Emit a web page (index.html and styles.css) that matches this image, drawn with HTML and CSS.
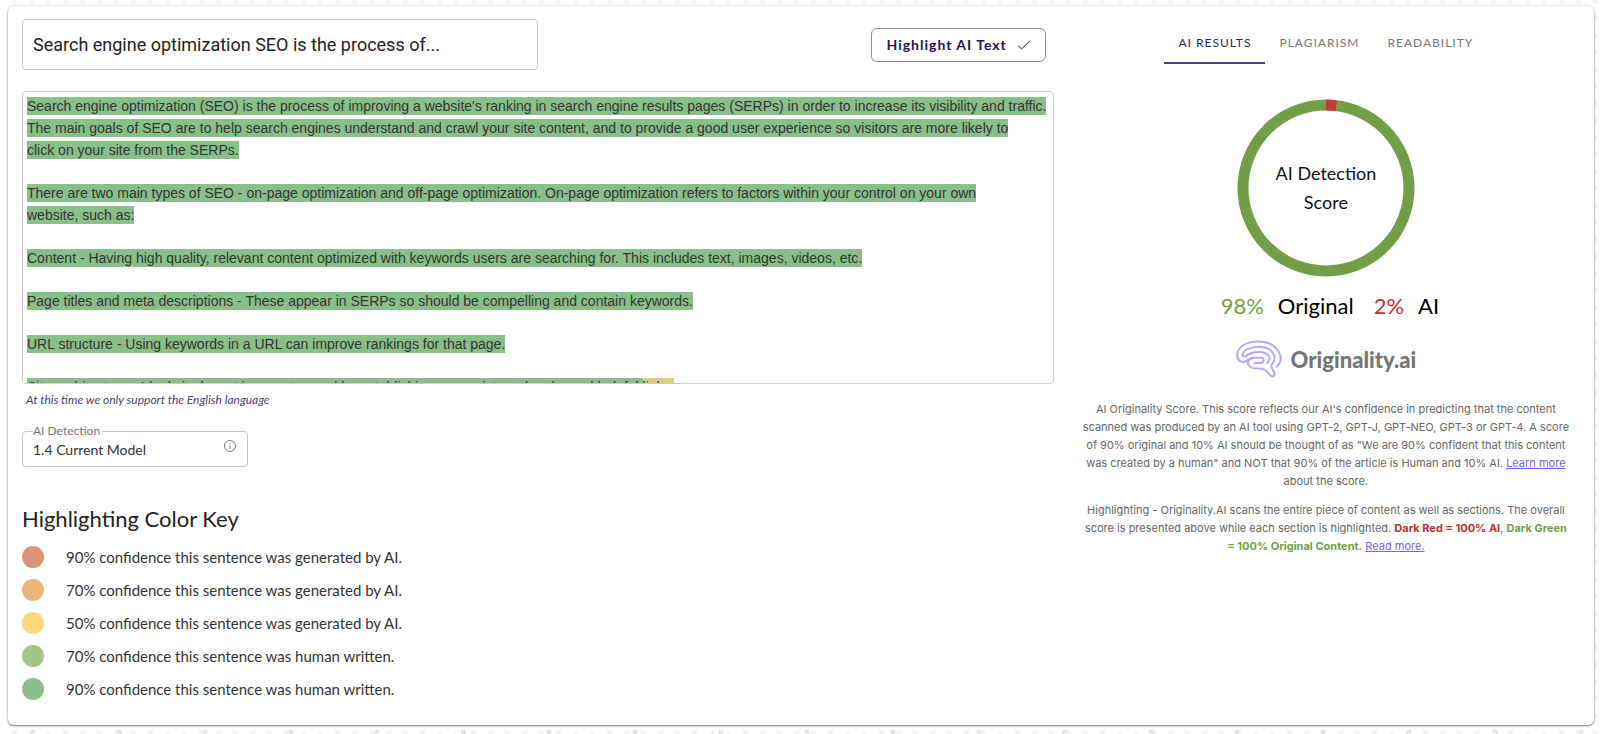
FILE: index.html
```html
<!DOCTYPE html>
<html lang="en">
<head>
    <meta charset="UTF-8">
    <meta name="viewport" content="width=device-width, initial-scale=1.0">
    <title>Content Scan</title>
    <link rel="stylesheet" href="styles.css">
</head>
<body>

    <main class="card">
        <section class="content">
            <div class="top-row">
                <input type="text" class="title-input" aria-label="Title" value="Search engine optimization SEO is the process of...">
                <button type="button" class="highlight-btn">
                    Highlight AI Text
                    <svg width="14" height="10" viewBox="0 0 14 10" fill="none" stroke="currentColor" aria-hidden="true"><path d="M1 5.5L4.5 9L13 0.8"/></svg>
                </button>
            </div>

            <div class="scan-text">
                <p><mark>Search engine optimization (SEO) is the process of improving a website's ranking in search engine results pages (SERPs) in order to increase its visibility and traffic. The main goals of SEO are to help search engines understand and crawl your site content, and to provide a good user experience so visitors are more likely to<br>click on your site from the SERPs.</mark></p>
                <p><mark>There are two main types of SEO - on-page optimization and off-page optimization. On-page optimization refers to factors within your control on your own<br>website, such as:</mark></p>
                <p><mark>Content - Having high quality, relevant content optimized with keywords users are searching for. This includes text, images, videos, etc.</mark></p>
                <p><mark>Page titles and meta descriptions - These appear in SERPs so should be compelling and contain keywords.</mark></p>
                <p><mark>URL structure - Using keywords in a URL can improve rankings for that page.</mark></p>
                <p><mark>Site architecture - Ideal site layout is easy to crawl by establishing proper internal paths and helpful </mark><mark class="unsure">links.</mark></p>
            </div>
            <p class="note">At this time we only support the English language</p>

            <fieldset class="model">
                <legend><label for="model">AI Detection</label></legend>
                <select id="model">
                    <option>1.4 Current Model</option>
                </select>
                <svg width="14" height="14" viewBox="0 0 14 14" fill="none" stroke="#777" aria-hidden="true"><circle cx="7" cy="7" r="5.5"/><path d="M7 6.3V10M7 4V5.2"/></svg>
            </fieldset>

            <h2>Highlighting Color Key</h2>
            <ul class="color-key">
                <li><span class="dot ai-90"></span>90% confidence this sentence was generated by AI.</li>
                <li><span class="dot ai-70"></span>70% confidence this sentence was generated by AI.</li>
                <li><span class="dot ai-50"></span>50% confidence this sentence was generated by AI.</li>
                <li><span class="dot human-70"></span>70% confidence this sentence was human written.</li>
                <li><span class="dot human-90"></span>90% confidence this sentence was human written.</li>
            </ul>
        </section>

        <section class="results">
            <div class="tabs" role="tablist">
                <button type="button" role="tab" class="tab active" aria-selected="true">AI RESULTS</button>
                <button type="button" role="tab" class="tab" aria-selected="false">PLAGIARISM</button>
                <button type="button" role="tab" class="tab" aria-selected="false">READABILITY</button>
            </div>

            <div class="gauge">
                <svg viewBox="0 0 178 178" fill="none" stroke-width="11" aria-hidden="true">
                    <circle cx="89" cy="89" r="83" stroke="#739e48"/>
                    <circle cx="89" cy="89" r="83" stroke="#c43c35" pathLength="100" stroke-dasharray="2 98" transform="rotate(-90 89 89)"/>
                </svg>
                <span>AI Detection Score</span>
            </div>

            <div class="score">
                <span class="green">98%</span><span>Original</span>
                <span class="red">2%</span><span>AI</span>
            </div>

            <div class="logo">
                <svg width="46" height="38" viewBox="10 8 138 114" fill="none" stroke="#b9a5fb" stroke-width="6" stroke-linecap="round" stroke-linejoin="round" aria-hidden="true">
                    <path d="M132 88C150 74 148 48 126 28C100 6 48 8 26 28C8 46 10 70 30 74C46 76 44 61 62 61H84C96 61 96 76 84 77H66"/>
                    <path d="M62 61C46 64 42 76 50 86C58 96 72 93 86 94C104 96 104 106 112 113C120 120 128 116 126 108C124 98 114 94 116 84C120 76 128 72 126 60C122 40 104 28 80 28C52 28 32 40 30 50C28 60 38 59 46 52C58 44 72 43 84 44C112 46 116 66 104 77"/>
                </svg>
                <span>Originality.ai</span>
            </div>

            <p>AI Originality Score. This score reflects our AI's confidence in predicting that the content scanned was produced by an AI tool using GPT-2, GPT-J, GPT-NEO, GPT-3 or GPT-4. A score of 90% original and 10% AI should be thought of as "We are 90% confident that this content was created by a human" and NOT that 90% of the article is Human and 10% AI. <a href="#">Learn more</a> about the score.</p>
            <p>Highlighting - Originality.AI scans the entire piece of content as well as sections. The overall score is presented above while each section is highlighted. <b class="red">Dark Red = 100% AI</b>, <b class="green">Dark Green = 100% Original Content.</b> <a href="#">Read more.</a></p>
        </section>
    </main>

</body>
</html>
```

FILE: styles.css
```css
* { box-sizing: border-box; }
body {
    margin: 0;
    padding: 6px 6px 8px 8px;
    font-family: Lato, sans-serif;
    font-size: 15px;
    color: #333;
    background-color: #fff;
    background-image: radial-gradient(circle, #e6e6e6 2px, transparent 3px), radial-gradient(circle, #f5f5f5 2px, transparent 3px);
    background-size: 86px 86px, 17px 17px;
    background-position: -10px 1px, 6px -7px;
}
button, input, select { font-family: inherit; color: inherit; }
h2, p, ul { margin: 0; padding: 0; }

.card {
    display: grid;
    grid-template-columns: 67fr 33fr;
    gap: 18px;
    min-height: 719px;
    padding: 13px 14px;
    background: #fff;
    border-radius: 6px;
    box-shadow: 0 1px 2px rgba(0, 0, 0, 0.5), 0 0 3px rgba(0, 0, 0, 0.15);
}

.top-row { display: flex; justify-content: space-between; align-items: center; }
.title-input { width: 50%; height: 51px; padding: 0 10px; border: 1px solid #c8c8c8; border-radius: 4px; font-family: Roboto, sans-serif; font-size: 18px; color: #222; }
.highlight-btn {
    display: flex;
    align-items: center;
    gap: 10px;
    height: 34px;
    margin-right: 8px;
    padding: 0 14px;
    background: #fff;
    border: 1px solid #8d86ad;
    border-radius: 6px;
    font-size: 14px;
    font-weight: 700;
    letter-spacing: 1px;
    color: #1f1450;
}

.scan-text { height: 293px; margin-top: 21px; padding: 3px 0 0 4px; overflow: hidden; border: 1px solid #ccc; border-radius: 4px; font-family: "Liberation Sans", Arial, sans-serif; font-size: 14px; line-height: 22px; }
.scan-text p { margin-bottom: 21px; }
mark { padding: 1px 0; background: #89bf88; color: #333; }
mark.unsure { background: #dbcf7c; }
.note { margin: 8px 4px 0; font-size: 12px; line-height: 16px; font-style: italic; color: #4b4276; }

.model { display: flex; align-items: center; width: 226px; height: 43px; margin: 16px 0 0; padding: 0 10px 5px; border: 1px solid #c4c4c4; border-radius: 4px; }
.model legend { padding: 0 2px 0 0; font-size: 12px; line-height: 14px; color: #777; }
.model select { flex: 1; padding: 0; appearance: none; background: none; border: none; font-size: 14px; }
.model svg { margin-bottom: 8px; }

h2 { margin-top: 37px; font-size: 22px; line-height: 30px; font-weight: 400; color: #222; }
.color-key { display: grid; gap: 11px; margin-top: 12px; list-style: none; }
.color-key li { display: flex; align-items: center; gap: 22px; line-height: 22px; }
.dot { width: 22px; height: 22px; border-radius: 50%; }
.ai-90 { background: #de9278; }
.ai-70 { background: #ecb578; }
.ai-50 { background: #f8d87a; }
.human-70 { background: #a3c585; }
.human-90 { background: #89bf88; }

.results { text-align: center; }
.tabs { display: flex; justify-content: center; }
.tab { height: 45px; padding: 3px 14px 0; background: none; border: none; border-bottom: 2px solid transparent; font-size: 12px; letter-spacing: 1px; color: #757575; }
.tab.active { color: #2a1f60; border-color: #4b4276; }

.gauge { display: grid; place-items: center; width: 178px; margin: 35px auto 0; }
.gauge svg, .gauge span { grid-area: 1 / 1; }
.gauge span { width: 110px; font-size: 18px; line-height: 29px; color: #111; }

.score { display: flex; justify-content: center; gap: 14px; margin-top: 14px; padding-left: 8px; font-size: 22px; line-height: 30px; color: #000; }
.green { color: #739e48; }
.red { color: #c0302c; }
.score .red { margin-left: 6px; }
.logo { display: flex; justify-content: center; align-items: center; gap: 9px; height: 46px; margin: 15px 0 18px; font-size: 22px; font-weight: 900; color: #757575; }

.results p { margin: 11px 10px 0; font-family: Inter, sans-serif; font-size: 11px; line-height: 18px; color: #666; }
.results a { color: #7b61ea; }
```
